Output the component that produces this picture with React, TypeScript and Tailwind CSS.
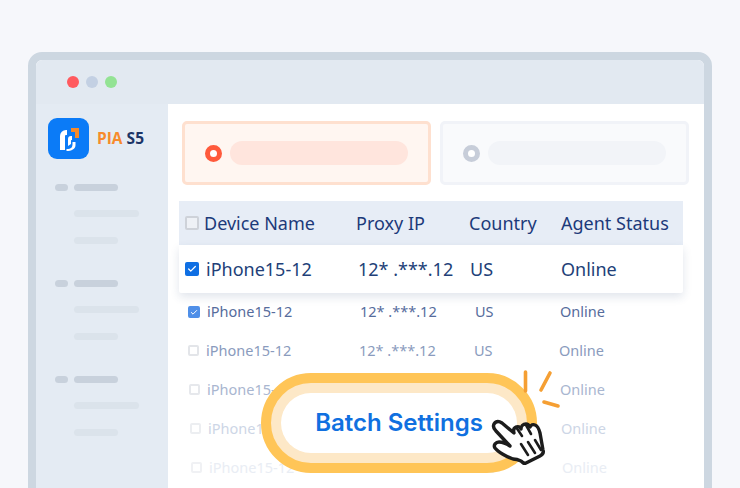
import { Check } from "lucide-react";

interface Fila {
  caja: string;
  texto: string;
  nombre: string;
  ip: string;
  pais: string;
  estado: string;
  altura: string;
  marcada?: boolean;
  margen: string;
}

const filas: Fila[] = [
  { caja: "size-3 ml-[9px] bg-[#4f8fe8] border-[#4f8fe8]", texto: "text-[#566c9c]", nombre: "iPhone15-12", ip: "12* .***.12", pais: "US", estado: "Online", altura: "h-[38px]", marcada: true, margen: "pl-0" },
  { caja: "size-[11px] ml-[9px] bg-white border-[#e3e5e9]", texto: "text-[#8a9bbd]", nombre: "iPhone15-12", ip: "12* .***.12", pais: "US", estado: "Online", altura: "h-[39px]", margen: "pl-0" },
  { caja: "size-[11px] ml-[10px] bg-white border-[#e6e8ec]", texto: "text-[#a9b6d0]", nombre: "iPhone15-12", ip: "12* .***.12", pais: "US", estado: "Online", altura: "h-[39px]", margen: "pl-0" },
  { caja: "size-[11px] ml-[11px] bg-white border-[#eceef1]", texto: "text-[#cdd6e6]", nombre: "iPhone15-12", ip: "12* .***.12", pais: "US", estado: "Online", altura: "h-[39px]", margen: "pl-0" },
  { caja: "size-[11px] ml-[12px] bg-white border-[#f0f1f4]", texto: "text-[#e9edf4]", nombre: "iPhone15-12", ip: "12* .***.12", pais: "US", estado: "Online", altura: "h-[39px]", margen: "pl-0" },
];

function GrupoLateral() {
  return (
    <div className="flex flex-col">
      <div className="flex items-center gap-[6px]">
        <div className="h-[7px] w-[13px] rounded-full bg-[#c8d1dc]" />
        <div className="h-[7px] w-[44px] rounded-full bg-[#c8d1dc]" />
      </div>
      <div className="mt-[19px] ml-[19px] h-[7px] w-[65px] rounded-full bg-[#dbe3eb]" />
      <div className="mt-[20px] ml-[19px] h-[7px] w-[44px] rounded-full bg-[#dbe3eb]" />
    </div>
  );
}

function Logo() {
  return (
    <div className="flex items-center gap-2">
      <div className="flex size-[41px] items-center justify-center rounded-[9px] bg-[#0b7bf7]">
        <svg width="25" height="25" viewBox="0 0 25 25" fill="none">
          <path d="M4 24V10a6 6 0 0 1 6-6h1v5h-1a1 1 0 0 0-1 1v14z" fill="#fff" />
          <path d="M10.5 23c5 0 6-2 6-5v-2h3v3c0 4-4 6-9 6z" fill="#fff" />
          <path d="M12 20v-7a3 3 0 0 1 3-3h1v4h-.5a.5.5 0 0 0-.5.5V18z" fill="#fff" />
          <path d="M15 2h8v10h-4V6h-4z" fill="#f58a2b" />
        </svg>
      </div>
      <span className="text-[15.5px] font-bold font-['Open_Sans',sans-serif] leading-none text-[#f78b2c]">
        PIA <span className="text-[#1c3567]">S5</span>
      </span>
    </div>
  );
}

function ManoCursor() {
  return (
    <svg width="60" height="56" viewBox="0 0 60 56" className="absolute left-[490px] top-[415px]">
      <path
        d="M4 9c2-3 5-3 8-1l12 10c-1-3 0-5 2-6 2-1 4 0 5 2 0-3 2-5 5-5 2 0 3 1 4 3 1-2 3-3 5-2 3 1 4 4 5 8l3 17c1 3-1 5-3 6l-14 7c-2 1-3 0-5-2-2-1-5-2-8-2-6-2-15-7-18-11-2-3 1-6 4-6 3 0 8 2 11 4L6 16C4 14 3 11 4 9z"
        fill="#fff"
        stroke="#1c1c1c"
        strokeWidth="3.4"
        strokeLinejoin="round"
      />
      <path d="M26 12l6 9M36 10l5 9M31 29l7 11M38 27l7 11M45 25l6 10" stroke="#1c1c1c" strokeWidth="2.6" strokeLinecap="round" fill="none" />
    </svg>
  );
}

export default function App() {
  return (
    <div className="relative h-[488px] w-[740px] overflow-hidden bg-[#f6f7fb] font-['Noto_Sans',sans-serif]">
      <div className="absolute left-[28px] top-[52px] h-[460px] w-[684px] rounded-[14px] border-8 border-[#cdd7e1] bg-white">
        <div className="flex h-[44px] items-center gap-[7px] rounded-t-[6px] bg-[#e2e9f1] pl-[31px]">
          <span className="size-[12px] rounded-full bg-[#ff5a5f]" />
          <span className="size-[12px] rounded-full bg-[#c3d0e3]" />
          <span className="size-[12px] rounded-full bg-[#93e394]" />
        </div>
        <div className="flex h-[400px]">
          <aside className="flex w-[132px] flex-col bg-[#e4ebf3] pl-[12px] pt-[14px]">
            <Logo />
            <div className="mt-[25px] ml-[7px] flex flex-col gap-[36px]">
              <GrupoLateral />
              <GrupoLateral />
              <GrupoLateral />
            </div>
          </aside>
          <main className="flex-1 bg-white pl-[11px] pt-[17px]">
            <div className="flex gap-[9px] pl-[3px]">
              <div className="flex h-[64px] w-[249px] items-center gap-[8px] rounded-[5px] border-[3px] border-[#fee0cf] bg-[#fff6f1] pl-[20px]">
                <span className="size-[17px] rounded-full border-[5px] border-[#ff5a3c] bg-white" />
                <span className="h-[24px] w-[178px] rounded-full bg-[#ffe5dd]" />
              </div>
              <div className="flex h-[64px] w-[249px] items-center gap-[8px] rounded-[5px] border-[3px] border-[#f1f3f8] bg-[#f9fafc] pl-[20px]">
                <span className="size-[17px] rounded-full border-[5px] border-[#c7cdd9] bg-white" />
                <span className="h-[24px] w-[178px] rounded-full bg-[#f2f4f8]" />
              </div>
            </div>
            <div className="mt-[16px] flex h-[44px] w-[504px] items-center bg-[#e7edf6] text-[18px] text-[#1c3a7a]">
              <span className="ml-[6px] size-[14px] rounded-[2px] border-2 border-[#ced2d9] bg-[#eef1f6]" />
              <span className="ml-[5px] w-[152px]">Device Name</span>
              <span className="w-[113px]">Proxy IP</span>
              <span className="w-[92px]">Country</span>
              <span>Agent Status</span>
            </div>
            <div className="relative flex h-[48px] w-[504px] items-center rounded-b-[2px] bg-white text-[18px] text-[#223f78] shadow-[0_4px_10px_rgba(40,70,120,0.14)]">
              <span className="ml-[6px] flex size-[14px] items-center justify-center rounded-[2px] bg-[#0f6fe3]">
                <Check size={10} strokeWidth={3} color="#fff" />
              </span>
              <span className="ml-[7px] w-[152px]">iPhone15-12</span>
              <span className="w-[112px]">12* .***.12</span>
              <span className="w-[91px]">US</span>
              <span>Online</span>
            </div>
            {filas.map((f, i) => (
              <div key={i} className={`flex w-[504px] items-center text-[14.5px] ${f.altura} ${f.texto} ${f.margen}`}>
                <span className={`flex shrink-0 items-center justify-center rounded-[2px] border-2 ${f.caja}`}>
                  {f.marcada && <Check size={9} strokeWidth={3} color="#fff" />}
                </span>
                <span className="ml-[7px] w-[153px] shrink-0">{f.nombre}</span>
                <span className="w-[115px] shrink-0">{f.ip}</span>
                <span className="w-[85px] shrink-0">{f.pais}</span>
                <span>{f.estado}</span>
              </div>
            ))}
          </main>
        </div>
      </div>

      <div className="absolute left-[261px] top-[373px] flex h-[100px] w-[276px] items-center justify-center rounded-full border-[10px] border-[#ffc557] bg-[#fde8c7] shadow-[0_0_0_0_transparent]">
        <div className="flex h-[60px] w-[236px] items-center justify-center rounded-full bg-white font-['Inter',sans-serif] text-[24px] font-semibold text-[#1070e0]">
          Batch Settings
        </div>
      </div>
      <svg width="50" height="60" viewBox="0 0 50 60" className="absolute left-[520px] top-[366px]" fill="none">
        <path d="M5.500 6v19M30 7l-9 17M24 36l14 4" stroke="#f59f33" strokeWidth="3.600" strokeLinecap="round" />
      </svg>
      <ManoCursor />
    </div>
  );
}
